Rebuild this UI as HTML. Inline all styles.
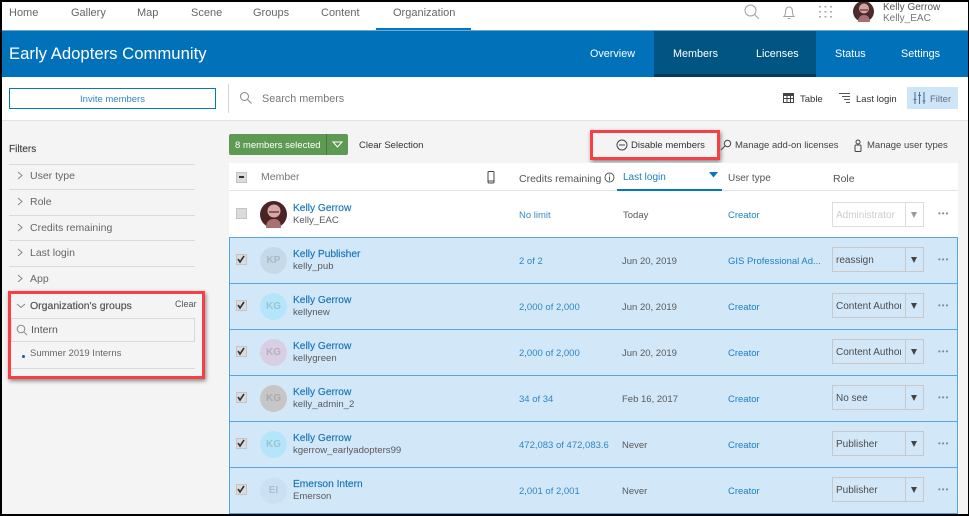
<!DOCTYPE html>
<html><head><meta charset="utf-8"><style>
html,body{margin:0;padding:0;background:#000}
#p{position:relative;width:969px;height:516px;overflow:hidden;background:#f4f4f4;font-family:"Liberation Sans",sans-serif;font-size:9.600px;color:#4c4c4c}
#p div,#p span.t,#p svg{position:absolute}
.t{position:absolute;white-space:nowrap;line-height:14px}
.lk{color:#1a7fc2}
.nav{font-size:11px;color:#666;top:6px}
.sub{font-size:10.800px;color:#fff;top:47px}
.nm{font-size:10.200px;color:#1573b8;-webkit-text-stroke:.15px #1573b8}
.line{background:#d9d9d9;height:1px}
.row{left:229px;width:729px;height:45px;background:#d2e8f9;border-top:1px solid #56a5de}
.av{left:260px;width:27px;height:27px;border-radius:50%;text-align:center;line-height:27px;font-size:10px;font-weight:bold}
.cb{left:236px;width:9px;height:9px;background:#dcdcdc;border:1px solid #c4c4c4}
.sel{left:832px;width:92px;height:25px;border:1px solid #c8c8c8;box-sizing:border-box}
.sel i{position:absolute;left:72px;top:0;width:1px;height:23px;background:#c8c8c8}
.sel b{position:absolute;left:78px;top:9px;width:0;height:0;border-left:3px solid transparent;border-right:3px solid transparent;border-top:6px solid #444}
.sel span{position:absolute;left:3px;top:6px;width:65px;overflow:hidden;white-space:nowrap;line-height:14px;font-size:10px;color:#4c4c4c}
.red{border:3px solid #f64045;box-sizing:border-box;box-shadow:1px 2px 4px rgba(0,0,0,.45)}
.dot{font-size:8px;color:#888;letter-spacing:1px}
.v{font-size:9.500px}
.u{color:#595959}
</style></head><body><div id="p">

<div style="left:2px;top:2px;width:966px;height:28px;background:#fff"></div>
<span class="t nav" style="left:9px">Home</span>
<span class="t nav" style="left:71px">Gallery</span>
<span class="t nav" style="left:137px">Map</span>
<span class="t nav" style="left:191px">Scene</span>
<span class="t nav" style="left:253px">Groups</span>
<span class="t nav" style="left:321px">Content</span>
<span class="t nav" style="left:393px">Organization</span>
<div style="left:376px;top:28px;width:95px;height:2px;background:#0079c1"></div>

<svg style="left:743px;top:3px" width="18" height="18" viewBox="0 0 18 18" fill="none" stroke="#a0a0a0"><circle cx="7.500" cy="7.500" r="5.500"/><path d="M11.500 11.500L16 16"/></svg>
<svg style="left:781px;top:4px" width="16" height="16" viewBox="0 0 16 16" fill="none" stroke="#a0a0a0"><path d="M3 12.500c1.200-1.200 1.600-2.500 1.600-5C4.600 4.500 6 3 8 3s3.400 1.500 3.400 4.500c0 2.500.4 3.800 1.600 5zM6.800 14.500h2.400"/></svg>
<svg style="left:818px;top:5px" width="15" height="14" viewBox="0 0 15 14" fill="#aaa"><rect x="1" y="1" width="2" height="1.500"/><rect x="6.500" y="1" width="2" height="1.500"/><rect x="12" y="1" width="2" height="1.500"/><rect x="1" y="6" width="2" height="1.500"/><rect x="6.500" y="6" width="2" height="1.500"/><rect x="12" y="6" width="2" height="1.500"/><rect x="1" y="11" width="2" height="1.500"/><rect x="6.500" y="11" width="2" height="1.500"/><rect x="12" y="11" width="2" height="1.500"/></svg>
<svg style="left:853px;top:1px" width="21" height="21" viewBox="0 0 21 21"><circle cx="10.500" cy="10.500" r="10.500" fill="#4a2a2a"/><circle cx="11" cy="7.500" r="5" fill="#d6a3a3"/><rect x="7" y="8" width="8" height="2" fill="#8a6060"/><path d="M5 21c0-5 3-7 6-7s6 2 6 7z" fill="#a87070"/></svg>
<span class="t" style="left:883px;top:1px;font-size:10px;color:#555">Kelly Gerrow</span>
<span class="t" style="left:883px;top:12px;font-size:10px;color:#777">Kelly_EAC</span>

<div style="left:2px;top:30px;width:966px;height:47px;background:#0171b9;border-top:1px solid #6fa9d0;box-sizing:border-box"></div>
<div style="left:654px;top:31px;width:162px;height:46px;background:#005583"></div>
<div style="left:654px;top:74px;width:162px;height:3px;background:#003a5c"></div>
<span class="t" style="left:9px;top:45px;font-size:16.700px;line-height:18px;color:#fff">Early Adopters Community</span>
<span class="t sub" style="left:590px">Overview</span>
<span class="t sub" style="left:673px">Members</span>
<span class="t sub" style="left:756px">Licenses</span>
<span class="t sub" style="left:835px">Status</span>
<span class="t sub" style="left:901px">Settings</span>

<div style="left:2px;top:77px;width:966px;height:43px;background:#fff;border-bottom:1px solid #e3e3e3"></div>
<div style="left:9px;top:88px;width:207px;height:21px;border:1px solid #0079c1;box-sizing:border-box;text-align:center;color:#2f86c2;font-size:9.500px;line-height:21px">Invite members</div>
<div style="left:228px;top:84px;width:1px;height:29px;background:#d4d4d4"></div>
<svg style="left:239px;top:91px" width="14" height="14" viewBox="0 0 14 14" fill="none" stroke="#888"><circle cx="5.500" cy="5.500" r="4"/><path d="M8.500 8.500L12.500 12.500"/></svg>
<span class="t" style="left:262px;top:92px;font-size:10.800px;color:#777">Search members</span>
<svg style="left:783px;top:93px" width="12" height="11" viewBox="0 0 12 11" fill="#444"><path d="M0 0h11v10H0zM1 3v2h2.500V3zm3.500 0v2H7V3zM8 3v2h2V3zM1 6v3h2.500V6zm3.500 0v3H7V6zM8 6v3h2V6z" fill-rule="evenodd"/></svg>
<span class="t" style="left:800px;top:93px;font-size:9.500px;color:#333">Table</span>
<svg style="left:839px;top:92px" width="13" height="12" viewBox="0 0 13 12" stroke="#555" fill="none"><path d="M0 1.500h11M3 4.500h8M5 7.500h6M7 10.500h4"/></svg>
<span class="t" style="left:856px;top:93px;font-size:9.500px;color:#333">Last login</span>
<div style="left:907px;top:87px;width:51px;height:22px;background:#cde5f7"></div>
<svg style="left:913px;top:92px" width="13" height="13" viewBox="0 0 13 13" stroke="#56728a" fill="none"><path d="M2 0v12M6.500 0v12M11 0v12M.5 7.500h3M5 3.500h3M9.500 9h3" stroke-width="1.100"/></svg>
<span class="t" style="left:930px;top:93px;font-size:9.500px;color:#5b6f80">Filter</span>

<span class="t" style="left:9px;top:143px;font-size:10px;color:#444;-webkit-text-stroke:.15px #444">Filters</span>
<div class="line" style="left:9px;top:164px;width:186px"></div>
<div class="line" style="left:9px;top:189px;width:186px"></div>
<div class="line" style="left:9px;top:215px;width:186px"></div>
<div class="line" style="left:9px;top:240px;width:186px"></div>
<div class="line" style="left:9px;top:266px;width:186px"></div>
<svg style="left:16px;top:172px" width="8" height="110" viewBox="0 0 8 110" fill="none" stroke="#888"><path d="M2 0l4 3.500L2 7M2 26l4 3.500L2 33M2 52l4 3.500L2 59M2 77l4 3.500L2 84M2 103l4 3.500-4 3.500"/></svg>
<span class="t" style="left:30px;top:169px;font-size:10.500px;color:#666">User type</span>
<span class="t" style="left:30px;top:195px;font-size:10.500px;color:#666">Role</span>
<span class="t" style="left:30px;top:221px;font-size:10.500px;color:#666">Credits remaining</span>
<span class="t" style="left:30px;top:246px;font-size:10.500px;color:#666">Last login</span>
<span class="t" style="left:30px;top:272px;font-size:10.500px;color:#666">App</span>

<svg style="left:16px;top:303px" width="10" height="6" viewBox="0 0 10 6" fill="none" stroke="#888"><path d="M1 1l4 3.500L9 1"/></svg>
<span class="t" style="left:30px;top:299px;font-size:10.500px;color:#555;-webkit-text-stroke:.2px #555">Organization's groups</span>
<span class="t" style="left:175px;top:297px;font-size:9px;color:#555">Clear</span>
<div style="left:11px;top:318px;width:184px;height:24px;border:1px solid #d9d9d9;box-sizing:border-box"></div>
<svg style="left:16px;top:324px" width="12" height="12" viewBox="0 0 12 12" fill="none" stroke="#888"><circle cx="5" cy="5" r="3.800"/><path d="M7.800 7.800L11 11"/></svg>
<span class="t" style="left:31px;top:323px;font-size:10.500px;color:#555">Intern</span>
<div style="left:22px;top:355px;width:3px;height:3px;border-radius:50%;background:#0b5fb0"></div>
<span class="t" style="left:30px;top:347px;font-size:9.500px;color:#666">Summer 2019 Interns</span>
<div class="line" style="left:11px;top:368px;width:184px"></div>
<div class="red" style="left:8px;top:291px;width:197px;height:88px"></div>

<div style="left:229px;top:134px;width:119px;height:21px;background:#5f9a55;border-radius:2px"></div>
<div style="left:326px;top:134px;width:1px;height:21px;background:#487a40"></div>
<span class="t" style="left:235px;top:139px;font-size:9.500px;color:#fff">8 members selected</span>
<svg style="left:332px;top:141px" width="11" height="7" viewBox="0 0 11 7" fill="none" stroke="#fff"><path d="M1 1h9L5.500 6z"/></svg>
<span class="t" style="left:359px;top:139px;font-size:9.500px;color:#333">Clear Selection</span>

<svg style="left:616px;top:139px" width="12" height="12" viewBox="0 0 12 12" fill="none" stroke="#444"><circle cx="6" cy="6" r="5"/><path d="M3 6h6"/></svg>
<span class="t" style="left:631px;top:139px;font-size:9.500px;color:#333">Disable members</span>
<div class="red" style="left:590px;top:130px;width:130px;height:30px"></div>
<svg style="left:720px;top:139px" width="12" height="12" viewBox="0 0 12 12" fill="none" stroke="#444"><circle cx="7.500" cy="4.500" r="3.200"/><path d="M5 7L1 11"/></svg>
<span class="t" style="left:735px;top:139px;font-size:9.500px;color:#444">Manage add-on licenses</span>
<svg style="left:853px;top:139px" width="10" height="13" viewBox="0 0 10 13" fill="none" stroke="#444"><circle cx="5" cy="3" r="2"/><rect x="2" y="6" width="6" height="6.500" rx="1"/></svg>
<span class="t" style="left:867px;top:139px;font-size:9.500px;color:#444">Manage user types</span>

<div style="left:229px;top:163px;width:729px;height:74px;background:#fff"></div>
<div style="left:229px;top:190px;width:729px;height:1px;background:#e4e4e4"></div>
<div class="cb" style="top:172px"><div style="left:2px;top:3px;width:5px;height:2px;background:#333"></div></div>
<span class="t" style="left:261px;top:170px;font-size:10.500px;color:#777">Member</span>
<svg style="left:487px;top:171px" width="8" height="13" viewBox="0 0 8 13" fill="none" stroke="#444"><rect x="1" y=".5" width="6" height="11.500" rx="1"/><path d="M1 10h6"/></svg>
<span class="t" style="left:519px;top:172px;font-size:10.500px;color:#555">Credits remaining</span>
<svg style="left:604px;top:172px" width="11" height="11" viewBox="0 0 11 11" fill="none" stroke="#555"><circle cx="5.500" cy="5.500" r="4.500"/><path d="M5.500 4.500v4M5.500 2.500v1"/></svg>
<span class="t lk" style="left:623px;top:171px;font-size:10px">Last login</span>
<svg style="left:709px;top:172px" width="9" height="6" viewBox="0 0 9 6" fill="#0079c1"><path d="M0 0h9L4.500 5.500z"/></svg>
<div style="left:617px;top:189px;width:105px;height:2px;background:#0079c1"></div>
<span class="t" style="left:728px;top:172px;font-size:10px;color:#555">User type</span>
<span class="t" style="left:833px;top:172px;font-size:10.500px;color:#555">Role</span>

<div class="cb" style="top:208px"></div>
<svg style="left:260px;top:201px" width="27" height="27" viewBox="0 0 27 27"><circle cx="13.500" cy="13.500" r="13.500" fill="#4a2424"/><circle cx="14" cy="10" r="6.500" fill="#d8a8a8"/><rect x="9" y="10" width="10" height="2" fill="#8a5a5a"/><path d="M6 27c0-7 4-9 8-9s7 2 7 9z" fill="#a87070"/></svg>
<span class="t nm" style="left:293px;top:202px">Kelly Gerrow</span>
<span class="t u" style="left:293px;top:214px">Kelly_EAC</span>
<span class="t v" style="left:519px;top:209px;color:#3b8bc4">No limit</span>
<span class="t v u" style="left:623px;top:209px">Today</span>
<span class="t lk v" style="left:728px;top:209px">Creator</span>
<div class="sel" style="top:202px;border-color:#ddd"><i style="background:#ddd"></i><b style="border-top-color:#999"></b><span style="color:#ccc">Administrator</span></div>
<span class="t dot" style="left:938px;top:207px">&#8226;&#8226;&#8226;</span>

<div class="row" style="top:237px"></div>
<div class="row" style="top:283px"></div>
<div class="row" style="top:329px"></div>
<div class="row" style="top:375px"></div>
<div class="row" style="top:421px"></div>
<div class="row" style="top:467px"></div>
<div style="left:229px;top:513px;width:729px;height:1px;background:#56a5de"></div>
<div style="left:229px;top:237px;width:1px;height:276px;background:#56a5de"></div>
<div style="left:957px;top:237px;width:1px;height:276px;background:#56a5de"></div>

<div class="cb" style="top:254px"></div><div class="cb" style="top:300px"></div><div class="cb" style="top:346px"></div><div class="cb" style="top:392px"></div><div class="cb" style="top:438px"></div><div class="cb" style="top:484px"></div>
<svg style="left:237px;top:255px" width="9" height="240" viewBox="0 0 9 240" fill="none" stroke="#333" stroke-width="1.600"><path d="M1 4l2 3 4-6M1 50l2 3 4-6M1 96l2 3 4-6M1 142l2 3 4-6M1 188l2 3 4-6M1 234l2 3 4-6"/></svg>

<div class="av" style="top:247px;background:#c6d9e8;color:#a8b9c6">KP</div>
<div class="av" style="top:293px;background:#b5e5fa;color:#9cc3d4">KG</div>
<div class="av" style="top:339px;background:#d9cfe4;color:#b8aec4">KG</div>
<div class="av" style="top:385px;background:#c6c6c6;color:#aaa">KG</div>
<div class="av" style="top:431px;background:#b5e5fa;color:#9cc3d4">KG</div>
<div class="av" style="top:477px;background:#cbe0f3;color:#a9bed0">EI</div>

<span class="t nm" style="left:293px;top:248px">Kelly Publisher</span><span class="t u" style="left:293px;top:260px">kelly_pub</span>
<span class="t nm" style="left:293px;top:294px">Kelly Gerrow</span><span class="t u" style="left:293px;top:306px">kellynew</span>
<span class="t nm" style="left:293px;top:340px">Kelly Gerrow</span><span class="t u" style="left:293px;top:352px">kellygreen</span>
<span class="t nm" style="left:293px;top:386px">Kelly Gerrow</span><span class="t u" style="left:293px;top:398px">kelly_admin_2</span>
<span class="t nm" style="left:293px;top:432px">Kelly Gerrow</span><span class="t u" style="left:293px;top:444px">kgerrow_earlyadopters99</span>
<span class="t nm" style="left:293px;top:478px">Emerson Intern</span><span class="t u" style="left:293px;top:490px">Emerson</span>

<span class="t v" style="left:519px;top:255px;color:#2f86c2">2 of 2</span>
<span class="t v" style="left:519px;top:301px;color:#2f86c2">2,000 of 2,000</span>
<span class="t v" style="left:519px;top:347px;color:#2f86c2">2,000 of 2,000</span>
<span class="t v" style="left:519px;top:393px;color:#2f86c2">34 of 34</span>
<span class="t v" style="left:519px;top:439px;color:#2f86c2">472,083 of 472,083.6</span>
<span class="t v" style="left:519px;top:485px;color:#2f86c2">2,001 of 2,001</span>

<span class="t v u" style="left:622px;top:255px">Jun 20, 2019</span>
<span class="t v u" style="left:622px;top:301px">Jun 20, 2019</span>
<span class="t v u" style="left:622px;top:347px">Jun 20, 2019</span>
<span class="t v u" style="left:622px;top:393px">Feb 16, 2017</span>
<span class="t v u" style="left:622px;top:439px">Never</span>
<span class="t v u" style="left:622px;top:485px">Never</span>

<span class="t lk v" style="left:728px;top:255px">GIS Professional Ad...</span>
<span class="t lk v" style="left:728px;top:301px">Creator</span>
<span class="t lk v" style="left:728px;top:347px">Creator</span>
<span class="t lk v" style="left:728px;top:393px">Creator</span>
<span class="t lk v" style="left:728px;top:439px">Creator</span>
<span class="t lk v" style="left:728px;top:485px">Creator</span>

<div class="sel" style="top:247px"><i></i><b></b><span>reassign</span></div>
<div class="sel" style="top:293px"><i></i><b></b><span>Content Author</span></div>
<div class="sel" style="top:339px"><i></i><b></b><span>Content Author</span></div>
<div class="sel" style="top:385px"><i></i><b></b><span>No see</span></div>
<div class="sel" style="top:431px"><i></i><b></b><span>Publisher</span></div>
<div class="sel" style="top:477px"><i></i><b></b><span>Publisher</span></div>

<span class="t dot" style="left:938px;top:253px">&#8226;&#8226;&#8226;</span>
<span class="t dot" style="left:938px;top:299px">&#8226;&#8226;&#8226;</span>
<span class="t dot" style="left:938px;top:345px">&#8226;&#8226;&#8226;</span>
<span class="t dot" style="left:938px;top:391px">&#8226;&#8226;&#8226;</span>
<span class="t dot" style="left:938px;top:437px">&#8226;&#8226;&#8226;</span>
<span class="t dot" style="left:938px;top:483px">&#8226;&#8226;&#8226;</span>

<div style="left:0;top:0;width:969px;height:2px;background:#000"></div>
<div style="left:0;top:514px;width:969px;height:2px;background:#000"></div>
<div style="left:0;top:0;width:2px;height:516px;background:#000"></div>
<div style="left:968px;top:0;width:1px;height:516px;background:#000"></div>
</div></body></html>
